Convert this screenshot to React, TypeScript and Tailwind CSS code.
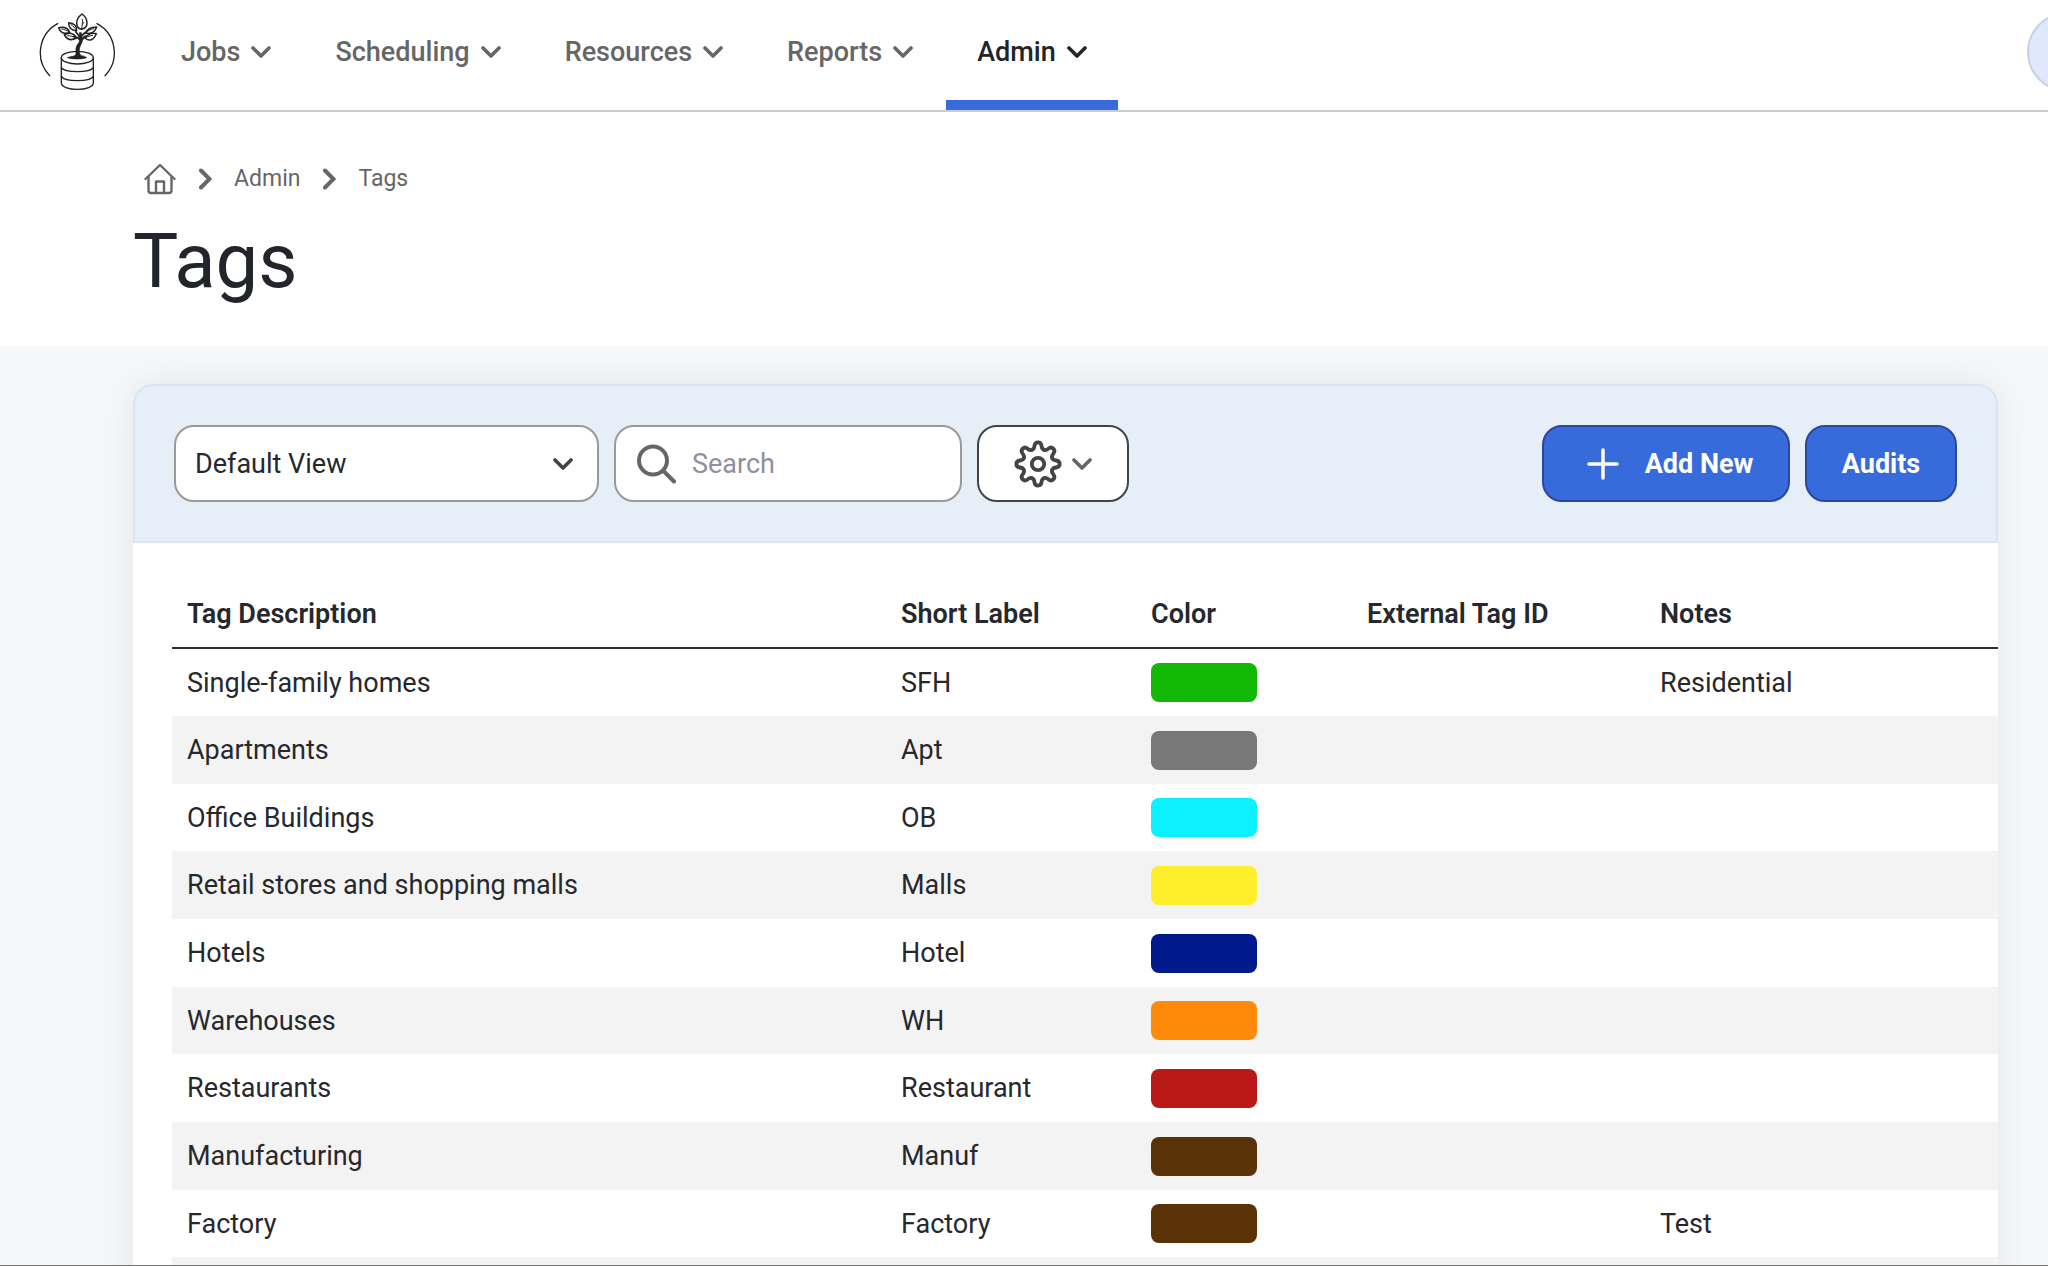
import clsx from "clsx";

const navItems = [
  { label: "Jobs", active: false },
  { label: "Scheduling", active: false },
  { label: "Resources", active: false },
  { label: "Reports", active: false },
  { label: "Admin", active: true },
];

const tags = [
  { name: "Single-family homes", short: "SFH", color: "bg-[#13b805]", notes: "Residential" },
  { name: "Apartments", short: "Apt", color: "bg-[#787878]", notes: "" },
  { name: "Office Buildings", short: "OB", color: "bg-[#0cf0ff]", notes: "" },
  { name: "Retail stores and shopping malls", short: "Malls", color: "bg-[#ffee2b]", notes: "" },
  { name: "Hotels", short: "Hotel", color: "bg-[#001a8c]", notes: "" },
  { name: "Warehouses", short: "WH", color: "bg-[#ff8a0a]", notes: "" },
  { name: "Restaurants", short: "Restaurant", color: "bg-[#b91816]", notes: "" },
  { name: "Manufacturing", short: "Manuf", color: "bg-[#5a3208]", notes: "" },
  { name: "Factory", short: "Factory", color: "bg-[#5a3208]", notes: "Test" },
  { name: "", short: "", color: "", notes: "" },
];

function ChevronDown({ className }: { className?: string }) {
  return (
    <svg viewBox="0 0 20 12" className={clsx("h-3 w-5 shrink-0", className)} fill="none" stroke="currentColor" strokeWidth="3.6" strokeLinecap="round" strokeLinejoin="round" aria-hidden="true">
      <path d="M2 2l8 8 8-8" />
    </svg>
  );
}

function ChevronRight() {
  return (
    <svg viewBox="0 0 14 22" className="h-[22px] w-[14px] shrink-0" fill="none" stroke="currentColor" strokeWidth="4" strokeLinecap="round" aria-hidden="true">
      <path d="M3 2.5l8.5 8.5L3 19.5" strokeLinejoin="miter" />
    </svg>
  );
}

function Logo() {
  return (
    <svg viewBox="54 36 240 240" className="size-20" fill="none" stroke="#222" strokeWidth="4" strokeLinecap="round" strokeLinejoin="round" role="img" aria-label="Home">
      <path d="M113 71A99 99 0 0 0 89 227" />
      <path d="M231 71A99 99 0 0 1 255 227" />
      {/* coin stack */}
      <ellipse cx="172" cy="173" rx="48" ry="19" />
      <path d="M124 173v76c0 11 21 19 48 19s48-8 48-19v-76" />
      <path d="M124 203c5 8 24 12 48 12s43-4 48-12M124 229c5 8 24 13 48 13s43-5 48-13" />
      {/* trunk */}
      <path d="M143 173c8-4 18-3 23-7 5-8-1-18 4-28 4-8 10-11 9-22l-1-18h6l2 16 10-8 3 3-11 11c-3 12-9 18-10 28-1 9 0 15 6 19 6 1 12 2 16 6-12 5-46 5-57 0z" fill="#222" strokeWidth="2" />
      <path d="M181 122c-5-9-11-11-20-13M179 112c-4-8-6-10-12-17M185 108c4-6 8-9 14-12" strokeWidth="5" />
      {/* leaves */}
      <g strokeWidth="4.5">
        <path d="M186 42c-11 8-16 18-16 27 0 10 6 17 14 19 10-2 17-10 17-19 0-10-5-20-15-27z" />
        <path d="M187 58c2 8-1 18-2 30M187 72l5-5" strokeWidth="3" />
        <path d="M146 68c0 12 4 23 24 24 1-15-8-23-24-24z" />
        <path d="M153 74c7 4 12 10 17 18" strokeWidth="3" />
        <path d="M116 83c5 14 16 20 33 14-5-13-17-17-33-14z" />
        <path d="M125 87c8 1 16 4 24 10" strokeWidth="3" />
        <path d="M133 105c9 14 21 18 36 9-7-15-21-18-36-9z" />
        <path d="M143 107c8 0 17 3 26 7" strokeWidth="3" />
        <path d="M230 81c-16 0-27 4-34 18 17 4 28-1 34-18z" />
        <path d="M221 86c-10 2-17 6-25 13" strokeWidth="3" />
        <path d="M229 101c-13-4-25 0-34 13 13 12 26 6 34-13z" />
        <path d="M218 106c-8 1-15 4-23 8" strokeWidth="3" />
      </g>
    </svg>
  );
}

function HomeIcon() {
  return (
    <svg viewBox="0 0 32 32" className="size-8" fill="none" stroke="currentColor" strokeWidth="2.4" strokeLinecap="round" strokeLinejoin="round" aria-hidden="true">
      <path d="M1.5 16L16 2l14.5 14" />
      <path d="M4.5 14v13.5a2.5 2.5 0 0 0 2.5 2.5h18a2.5 2.5 0 0 0 2.5-2.5V14" />
      <path d="M12 30V18.5h8V30" />
    </svg>
  );
}

function GearIcon() {
  return (
    <svg viewBox="-24 -24 48 48" className="size-12" fill="none" stroke="currentColor" strokeWidth="3.8" strokeLinecap="round" strokeLinejoin="round" aria-hidden="true">
      <circle r="6.2" />
      {[0, 45, 90, 135, 180, 225, 270, 315].map((angle) => (
        <path
          key={angle}
          transform={`rotate(${angle})`}
          d="M-5.9-14.2C-4.2-14.9-3.7-16-3.5-18.2C-3-22.8 3-22.8 3.5-18.2C3.7-16 4.2-14.9 5.9-14.2"
        />
      ))}
    </svg>
  );
}

function Header() {
  return (
    <header className="flex h-28 shrink-0 items-stretch border-b-2 border-[#cccccc] pl-[38px]">
      <a href="#" className="mt-3 mr-8 self-start">
        <Logo />
      </a>
      <nav className="flex gap-0.5">
        {navItems.map((item) => (
          <button
            key={item.label}
            type="button"
            className={clsx(
              "flex items-center gap-[11px] border-b-[10px] px-[31px] pt-1 font-medium",
              item.active ? "border-[#376bdb] text-[#222429]" : "border-transparent text-[#666666]"
            )}
          >
            {item.label}
            <ChevronDown />
          </button>
        ))}
      </nav>
      <button type="button" aria-label="Account" className="mt-3 -mr-[59px] ml-auto size-20 shrink-0 rounded-full border-2 border-[#c9d1de] bg-[#dfe9fb]" />
    </header>
  );
}

function PageTitle() {
  return (
    <section className="h-[234px] shrink-0 pt-[51px] pl-[133px]">
      <nav aria-label="Breadcrumb" className="flex h-8 items-center gap-[22px] pl-[11px] text-[23px] text-[#666666]">
        <a href="#" aria-label="Home">
          <HomeIcon />
        </a>
        <ChevronRight />
        <a href="#">Admin</a>
        <ChevronRight />
        <a href="#">Tags</a>
      </nav>
      <h1 className="mt-5 text-[76px] leading-[92px] text-[#22252b]">Tags</h1>
    </section>
  );
}

function Toolbar() {
  return (
    <div className="flex items-center gap-[15px] rounded-t-[20px] border-2 border-[#dbe4f4] bg-[#e6eef7] px-[39px] py-[39px]">
      <div className="grid w-[425px] items-center">
        <select aria-label="View" className="col-start-1 row-start-1 h-[77px] w-full appearance-none rounded-[20px] border-2 border-[#999999] bg-white px-[19px]">
          <option>Default View</option>
        </select>
        <ChevronDown className="pointer-events-none col-start-1 row-start-1 mr-[26px] justify-self-end text-[#444444]" />
      </div>
      <label className="flex h-[77px] w-[348px] items-center gap-[15px] rounded-[20px] border-2 border-[#999999] bg-white px-[21px]">
        <svg viewBox="0 0 40 40" className="size-10 shrink-0" fill="none" stroke="#666" strokeWidth="4" strokeLinecap="round" aria-hidden="true">
          <circle cx="16" cy="16.5" r="14" />
          <path d="M26.5 27L37 37.5" />
        </svg>
        <input type="search" placeholder="Search" aria-label="Search" className="w-full min-w-0 placeholder:text-[#9090a0]" />
      </label>
      <button type="button" aria-label="Settings" className="flex h-[77px] w-[152px] items-center justify-center gap-2.5 rounded-[20px] border-2 border-[#444444] bg-white text-[#444444]">
        <GearIcon />
        <ChevronDown className="text-[#666666]" />
      </button>
      <div className="ml-auto flex gap-[15px] font-bold text-white">
        <button type="button" className="flex h-[77px] w-[248px] items-center justify-center gap-[26px] rounded-[20px] border-2 border-[#2b479f] bg-[#376bdb] pl-2">
          <svg viewBox="0 0 32 32" className="size-8" fill="none" stroke="currentColor" strokeWidth="3.5" strokeLinecap="round" aria-hidden="true">
            <path d="M16 2v28M2 16h28" />
          </svg>
          Add New
        </button>
        <button type="button" className="h-[77px] w-[152px] rounded-[20px] border-2 border-[#2b479f] bg-[#376bdb]">
          Audits
        </button>
      </div>
    </div>
  );
}

function TagTable() {
  return (
    <div className="pt-[37px] pl-[39px]">
      <table className="w-full table-fixed border-collapse text-left">
        <colgroup>
          <col className="w-[714px]" />
          <col className="w-[250px]" />
          <col className="w-[216px]" />
          <col className="w-[293px]" />
          <col />
        </colgroup>
        <thead>
          <tr className="h-[68px] border-b-2 border-[#2b2d31]">
            <th className="px-[15px] font-semibold">Tag Description</th>
            <th className="px-[15px] font-semibold">Short Label</th>
            <th className="px-[15px] font-semibold">Color</th>
            <th className="px-[15px] font-semibold">External Tag ID</th>
            <th className="px-[15px] font-semibold">Notes</th>
          </tr>
        </thead>
        <tbody>
          {tags.map((tag) => (
            <tr key={tag.name} className="h-[68px] even:bg-[#f3f3f3] nth-[3n]:h-[67px]">
              <td className="px-[15px]">{tag.name}</td>
              <td className="px-[15px]">{tag.short}</td>
              <td className="px-[15px]">
                {tag.color && <div className={clsx("h-[39px] w-[106px] rounded-lg", tag.color)} />}
              </td>
              <td />
              <td className="px-[15px]">{tag.notes}</td>
            </tr>
          ))}
        </tbody>
      </table>
    </div>
  );
}

export default function App() {
  return (
    <div className="flex h-screen flex-col overflow-hidden border-b border-[#777777] bg-white font-[Roboto,sans-serif] text-[27px] leading-9 text-[#26282c]">
      <Header />
      <PageTitle />
      <main className="flex-1 bg-[#f5f7f9] pt-[38px] pr-[50px] pl-[133px]">
        <div className="rounded-t-[20px] bg-white shadow-[0_0_36px_rgba(0,0,0,0.08)]">
          <Toolbar />
          <TagTable />
        </div>
      </main>
    </div>
  );
}
